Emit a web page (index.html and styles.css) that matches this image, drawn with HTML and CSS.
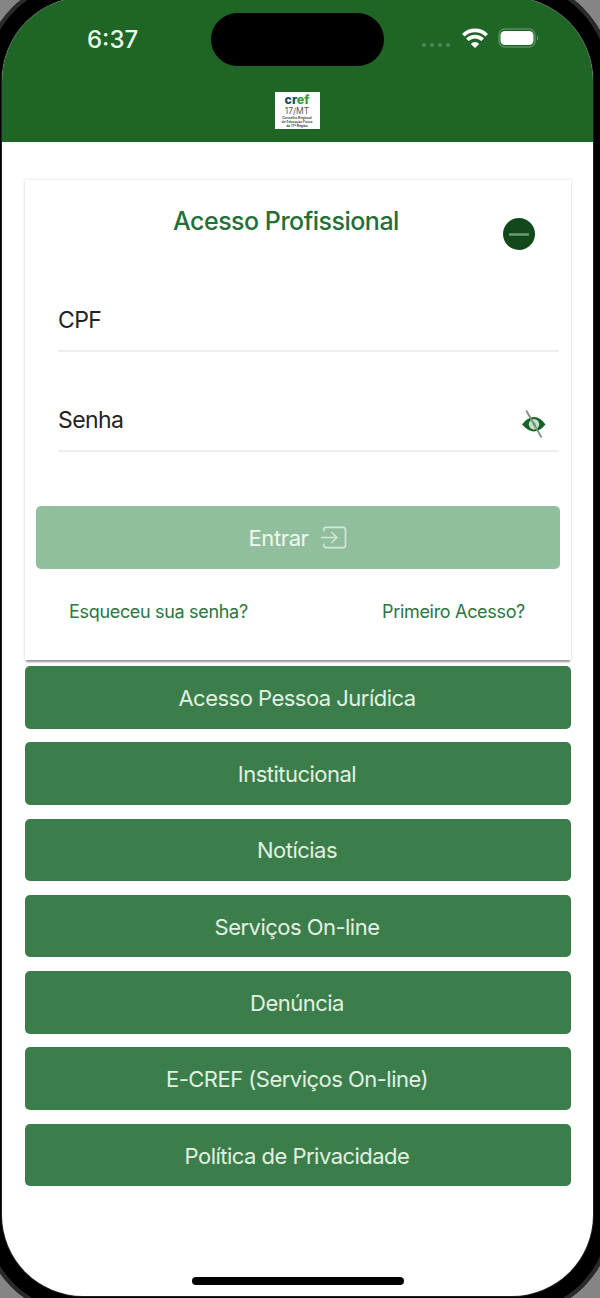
FILE: index.html
```html
<!DOCTYPE html>
<html lang="pt-BR">
<head>
    <meta charset="UTF-8">
    <meta name="viewport" content="width=device-width, initial-scale=1.0">
    <title>CREF17/MT</title>
    <link rel="stylesheet" href="styles.css">
</head>
<body>

<div class="stage">
<div class="phone">
    <div class="screen">
        <header class="header">
            <div class="status-bar">
                <span class="time">6:37</span>
                <div class="island"></div>
                <div class="status-icons">
                    <svg class="signal" width="30" height="6" viewBox="0 0 30 6" fill="#4c8a54">
                        <circle cx="3" cy="3" r="2"/>
                        <circle cx="11" cy="3" r="2"/>
                        <circle cx="19" cy="3" r="2"/>
                        <circle cx="27" cy="3" r="2"/>
                    </svg>
                    <svg class="wifi" width="26" height="20" viewBox="0 0 26 20" fill="none" stroke="#fff" stroke-width="3.6">
                        <path d="M1.3 7.2A16.6 16.6 0 0 1 24.7 7.2"/>
                        <path d="M5.4 11.8A10.8 10.8 0 0 1 20.6 11.8"/>
                        <path d="M13 20L8.8 15.9A5.6 5.6 0 0 1 17.2 15.9Z" fill="#fff" stroke="none"/>
                    </svg>
                    <svg class="battery" width="42" height="20" viewBox="0 0 42 20">
                        <rect x="1" y="1" width="36" height="18" rx="6" fill="none" stroke="#548f5b" stroke-width="1.6"/>
                        <rect x="2.5" y="3" width="33" height="14" rx="4.5" fill="#fff"/>
                        <path d="M39 7.5q2.4 2.5 0 5z" fill="#6ba071"/>
                    </svg>
                </div>
            </div>
            <div class="logo">
                <div class="logo-name">cr<span>ef</span></div>
                <div class="logo-region">17/MT</div>
                <div class="logo-text">Conselho Regional<br>de Educação Física<br>da 17ª Região</div>
            </div>
        </header>

        <main class="content">
            <form class="card" id="loginForm">
                <div class="card-header">
                    <h1>Acesso Profissional</h1>
                    <button type="button" class="collapse" aria-label="Recolher">
                        <svg width="32" height="32" viewBox="0 0 32 32">
                            <circle cx="16" cy="16" r="16" fill="#11491b"/>
                            <path d="M6 16.5h20" stroke="#6d9a70" stroke-width="2.6"/>
                        </svg>
                    </button>
                </div>

                <div class="field">
                    <label>CPF</label>
                </div>
                <div class="field">
                    <label>Senha</label>
                    <svg class="eye" width="26" height="30" viewBox="0 0 26 30">
                        <path d="M1 15.5Q6.5 8 13 8T24.5 15.5Q18.5 22.5 13 22.5T1 15.5Z" fill="#176229"/>
                        <circle cx="13" cy="15.3" r="5.2" fill="#c4dec8"/>
                        <path d="M11.8 12.5q3.6 1 2.8 5.3q-3.6-.2-2.8-5.3z" fill="#5c9a68"/>
                        <path d="M5.2 1.5L20.5 28.5" stroke="#78957c" stroke-width="1.8"/>
                    </svg>
                </div>

                <button type="submit" class="entrar">
                    <span>Entrar</span>
                    <svg width="27" height="23" viewBox="0 0 28 24" fill="none" stroke="#d0e8d5" stroke-width="1.7">
                        <path d="M4 5.5V3.5Q4 1.5 6 1.5H24Q26.5 1.5 26.5 4V20Q26.5 22.5 24 22.5H6Q4 22.5 4 20.5V18.5"/>
                        <path d="M1 12H17.5M12 6.5L17.5 12L12 17.5"/>
                    </svg>
                </button>

                <div class="links">
                    <a>Esqueceu sua senha?</a>
                    <a>Primeiro Acesso?</a>
                </div>
            </form>

            <nav class="menu">
                <a>Acesso Pessoa Jurídica</a>
                <a>Institucional</a>
                <a>Notícias</a>
                <a>Serviços On-line</a>
                <a>Denúncia</a>
                <a>E-CREF (Serviços On-line)</a>
                <a>Política de Privacidade</a>
            </nav>
        </main>

        <div class="home-bar"></div>
    </div>
</div>
</div>

</body>
</html>
```
FILE: styles.css
```css
* {
    box-sizing: border-box;
}
body {
    margin: 0;
    font-family: Inter, "Liberation Sans", sans-serif;
}
button {
    font-family: inherit;
    border: none;
    padding: 0;
    cursor: pointer;
}
.stage {
    width: 600px;
    height: 1298px;
    overflow: hidden;
    display: flow-root;
    background: #858585;
}
/* the device frame is larger than the visible stage */
.phone {
    width: 631px;
    height: 1339px;
    margin: -23px 0 0 -18px;
    padding: 20px;
    background: #000;
    border-radius: 104px 104px 100px 100px;
    box-shadow: inset 0 0 0 4px #2a2a2a;
}
.screen {
    height: 1299px;
    display: flex;
    flex-direction: column;
    background: #fff;
    border-radius: 84px 84px 81px 81px;
    box-shadow: 0 0 0 1px #222;
    overflow: hidden;
}
.header {
    height: 145px;
    padding-top: 3px;
    background: #1f6526;
    display: flex;
    flex-direction: column;
    align-items: center;
}
.status-bar {
    width: 100%;
    height: 92px;
    padding-top: 13px;
    display: grid;
    grid-template-columns: 209px 173px 1fr;
    align-items: start;
}
.time {
    padding: 12px 0 0 85px;
    font-size: 24px;
    line-height: 30px;
    font-weight: 500;
    color: #e9f8e9;
}
.island {
    height: 53px;
    border-radius: 27px;
    background: #000;
}
.status-icons {
    display: flex;
    padding: 15px 0 0 37px;
}
.signal {
    margin: 14px 11px 0 0;
}
.wifi {
    margin-right: 10px;
}
.logo {
    width: 45px;
    height: 37px;
    margin-left: -1px;
    background: #fff;
    text-align: center;
}
.logo-name {
    font-size: 12.5px;
    line-height: 15px;
    font-weight: 800;
    color: #174c68;
}
.logo-name span {
    color: #3c9b35;
}
.logo-region {
    font-size: 8.5px;
    line-height: 9px;
    color: #555;
}
.logo-text {
    font-size: 3.3px;
    line-height: 4px;
    font-weight: 600;
    color: #333;
}
.content {
    flex: 1;
    padding: 38px 22px 0 23px;
}
.card {
    height: 480px;
    background: #fff;
    box-shadow: 0 3px 2px -1px rgba(0, 0, 0, 0.4), 0 0 3px rgba(0, 0, 0, 0.15);
}
.card-header {
    height: 102px;
    padding: 24px 36px 0 148px;
    display: flex;
    justify-content: space-between;
    align-items: flex-start;
}
h1 {
    margin: 0;
    font-size: 25px;
    line-height: 34px;
    font-weight: 500;
    letter-spacing: -0.5px;
    color: #226f37;
    white-space: nowrap;
}
.collapse {
    height: 32px;
    margin-top: 14px;
    background: none;
}
.field {
    height: 70px;
    margin: 0 12px 30px 33px;
    padding-top: 22px;
    display: flex;
    justify-content: space-between;
    border-bottom: 2px solid #eee;
    font-size: 23px;
    line-height: 32px;
    letter-spacing: -0.6px;
    color: #222;
}
.eye {
    margin: 5px 12px 0 0;
}
.entrar {
    width: 524px;
    height: 63px;
    margin: 54px 0 0 11px;
    display: flex;
    justify-content: center;
    align-items: center;
    gap: 12px;
    border-radius: 5px;
    background: #91bf9d;
    color: #eef8ef;
    font-size: 22px;
    letter-spacing: -0.4px;
}
.links {
    display: flex;
    justify-content: space-between;
    padding: 31px 46px 0 44px;
    font-size: 18px;
    line-height: 24px;
    letter-spacing: -0.32px;
    color: #2b7641;
}
.menu {
    margin-top: 6px;
    display: flex;
    flex-direction: column;
    gap: 13.8px;
}
.menu a {
    height: 62.5px;
    display: flex;
    justify-content: center;
    align-items: center;
    padding: 1px 2px 0 0;
    border-radius: 5px;
    background: #3c7e4b;
    color: #e1f1e2;
    font-size: 22px;
    letter-spacing: -0.52px;
}
.home-bar {
    width: 212px;
    height: 8px;
    margin: 0 0 11px 190px;
    border-radius: 4px;
    background: #000;
}
```
